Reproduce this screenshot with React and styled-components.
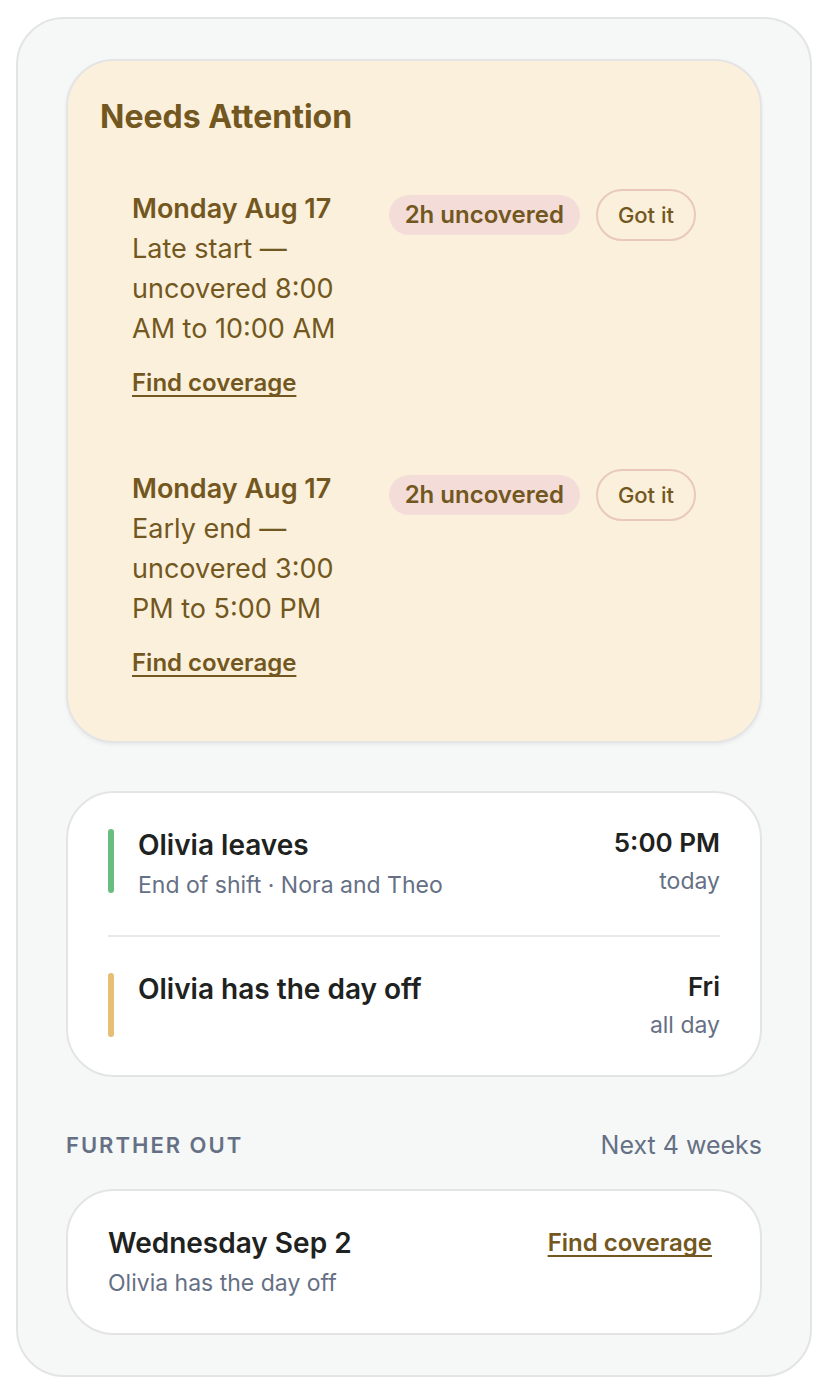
import styled, { createGlobalStyle } from "styled-components";

const GlobalStyle = createGlobalStyle`
  *, *::before, *::after {
    box-sizing: border-box;
  }

  body {
    margin: 0;
    background: #fff;
    color: #1e2220;
    font-family: Inter, "Liberation Sans", sans-serif;
    -webkit-font-smoothing: antialiased;
  }

  h2, h3, p, ul {
    margin: 0;
    padding: 0;
  }

  ul {
    list-style: none;
  }
`;

// ---------- Styled components ----------
const Page = styled.div`
  padding: 17px 16px 15px;
`;

const Panel = styled.main`
  padding: 40px 48px;
  border: 2px solid #e5e4e5;
  border-radius: 48px;
  background: #f5f8f7;
`;

const Card = styled.section`
  border: 2px solid #e5e4e5;
  border-radius: 48px;
  background: #fff;
`;

const AlertCard = styled(Card)`
  padding: 32px;
  margin-bottom: 48px;
  background: #fbf0dc;
  color: #735720;
  box-shadow: 0 2px 4px rgba(0, 0, 0, 0.06);
`;

const AlertHeading = styled.h2`
  font-size: 32px;
  font-weight: 700;
  line-height: 48px;
`;

const AlertItem = styled.li`
  display: flex;
  align-items: flex-start;
  gap: 32px;
  padding: 48px 32px 26px;

  & + & {
    padding-top: 40px;
  }
`;

const AlertBody = styled.div`
  flex: 1;
  min-width: 0;
`;

const Title = styled.h3`
  font-size: 28px;
  font-weight: 600;
  line-height: 40px;
`;

const AlertTitle = styled(Title)`
  font-size: 27px;
`;

const AlertText = styled.p`
  margin-bottom: 14px;
  font-size: 27px;
  line-height: 40px;
`;

const TextLink = styled.a`
  display: inline-block;
  color: #735720;
  font-size: 24px;
  font-weight: 600;
  line-height: 40px;
  vertical-align: top;
  text-decoration: underline;
  text-decoration-thickness: 2px;
  text-decoration-skip-ink: none;
  text-underline-offset: 4px;
`;

const AlertActions = styled.div`
  display: flex;
  align-items: center;
  gap: 16px;
`;

const Badge = styled.span`
  padding: 4px 16px;
  border-radius: 20px;
  background: #f4ddd8;
  font-size: 24px;
  font-weight: 600;
  line-height: 32px;
  white-space: nowrap;
`;

const GotItButton = styled.button`
  padding: 8px 20px;
  border: 2px solid #e9c9be;
  border-radius: 26px;
  background: transparent;
  color: #735720;
  font: 500 22px/32px Inter, "Liberation Sans", sans-serif;
  white-space: nowrap;
  cursor: pointer;
`;

const EventCard = styled(Card)`
  padding: 0 40px;
  margin-bottom: 48px;
`;

const EventItem = styled.li`
  display: flex;
  gap: 24px;
  padding: 32px 0;

  & + & {
    border-top: 2px solid #e9eae6;
  }
`;

const Marker = styled.span`
  width: 6px;
  height: 64px;
  margin-top: 4px;
  border-radius: 3px;
  background: ${({ $color }) => $color};
`;

const EventBody = styled.div`
  flex: 1;
`;

const Muted = styled.p`
  margin-top: 2px;
  color: #667085;
  font-size: 23px;
  line-height: 36px;
`;

const EventTime = styled.div`
  text-align: right;
`;

const Time = styled.p`
  font-size: 26px;
  font-weight: 600;
  line-height: 36px;
`;

const SectionHeader = styled.header`
  display: flex;
  align-items: center;
  justify-content: space-between;
  margin-bottom: 24px;
  color: #667085;
`;

const SectionTitle = styled.h2`
  font-size: 22px;
  font-weight: 600;
  line-height: 40px;
  letter-spacing: 2px;
  text-transform: uppercase;
`;

const Range = styled.span`
  font-size: 25px;
  line-height: 40px;
`;

const FurtherCard = styled(Card)`
  display: flex;
  align-items: flex-start;
  justify-content: space-between;
  padding: 32px 48px 32px 40px;
`;

// ---------- Data ----------
const alerts = [
  { id: "late", day: "Monday Aug 17", text: "Late start — uncovered 8:00 AM to 10:00 AM" },
  { id: "early", day: "Monday Aug 17", text: "Early end — uncovered 3:00 PM to 5:00 PM" },
];

const events = [
  {
    title: "Olivia leaves",
    detail: "End of shift · Nora and Theo",
    time: "5:00 PM",
    when: "today",
    color: "#69be7f",
  },
  { title: "Olivia has the day off", time: "Fri", when: "all day", color: "#e6be74" },
];

// ---------- Component ----------
const App = () => (
  <>
    <GlobalStyle />
    <Page>
      <Panel>
        <AlertCard>
          <AlertHeading>Needs Attention</AlertHeading>
          <ul>
            {alerts.map((alert) => (
              <AlertItem key={alert.id}>
                <AlertBody>
                  <AlertTitle>{alert.day}</AlertTitle>
                  <AlertText>{alert.text}</AlertText>
                  <TextLink href="#coverage">Find coverage</TextLink>
                </AlertBody>
                <AlertActions>
                  <Badge>2h uncovered</Badge>
                  <GotItButton type="button">Got it</GotItButton>
                </AlertActions>
              </AlertItem>
            ))}
          </ul>
        </AlertCard>

        <EventCard>
          <ul>
            {events.map((event) => (
              <EventItem key={event.title}>
                <Marker $color={event.color} />
                <EventBody>
                  <Title>{event.title}</Title>
                  {event.detail && <Muted>{event.detail}</Muted>}
                </EventBody>
                <EventTime>
                  <Time>{event.time}</Time>
                  <Muted>{event.when}</Muted>
                </EventTime>
              </EventItem>
            ))}
          </ul>
        </EventCard>

        <SectionHeader>
          <SectionTitle>Further out</SectionTitle>
          <Range>Next 4 weeks</Range>
        </SectionHeader>
        <FurtherCard>
          <div>
            <Title>Wednesday Sep 2</Title>
            <Muted>Olivia has the day off</Muted>
          </div>
          <TextLink href="#coverage">Find coverage</TextLink>
        </FurtherCard>
      </Panel>
    </Page>
  </>
);

export default App;
